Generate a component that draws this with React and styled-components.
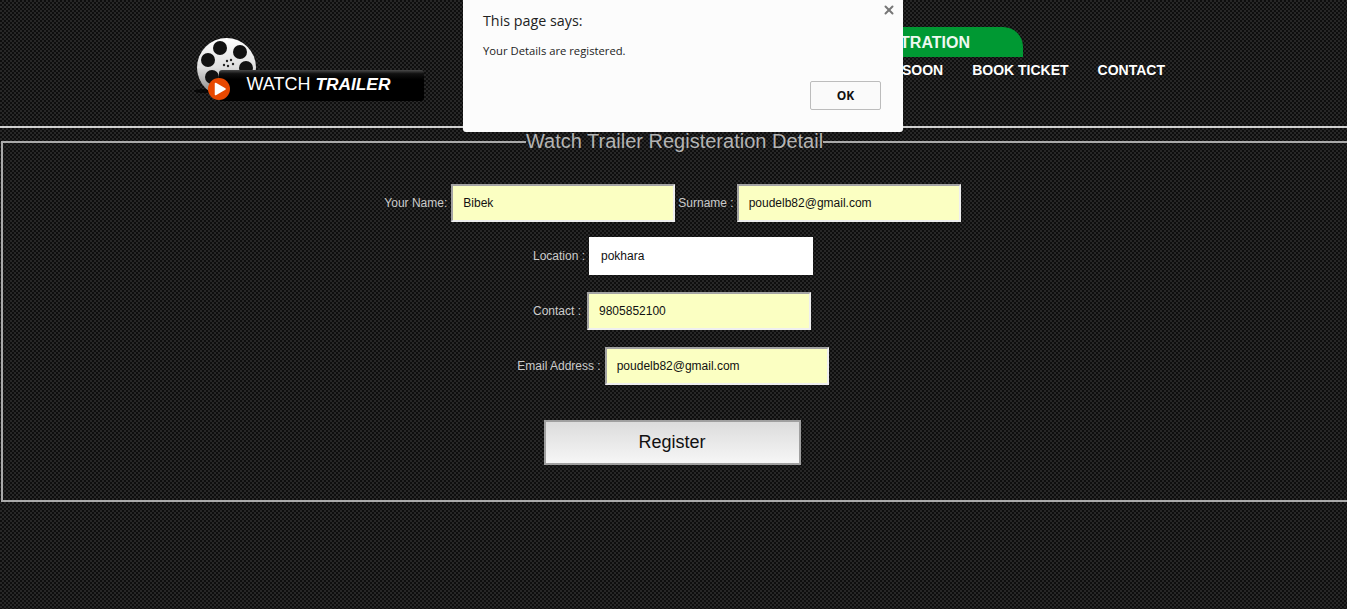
import React from "react";
import styled, { createGlobalStyle } from "styled-components";
import { X } from "lucide-react";

const GlobalStyle = createGlobalStyle`
  html, body {
    margin: 0;
    height: 100%;
    overflow: hidden;
  }
  body {
    font-family: "Liberation Sans", Arial, sans-serif;
    background-color: #181818;
    background-image: conic-gradient(#272727 25%, #0e0e0e 0 50%, #272727 0 75%, #0e0e0e 0);
    background-size: 4px 4px;
  }
`;

const Logo = () => (
  <LogoSvg viewBox="190 36 236 68" aria-label="Watch Trailer">
    <defs>
      <linearGradient id="reel" x1="0" y1="0" x2="0" y2="1">
        <stop offset="0" stopColor="#ffffff" />
        <stop offset="0.5" stopColor="#dedede" />
        <stop offset="1" stopColor="#7d7d7d" />
      </linearGradient>
      <linearGradient id="bar" x1="0" y1="0" x2="0" y2="1">
        <stop offset="0" stopColor="#4a4a4a" />
        <stop offset="0.12" stopColor="#111" />
        <stop offset="0.3" stopColor="#000" />
        <stop offset="1" stopColor="#000" />
      </linearGradient>
    </defs>
    <ellipse cx="204" cy="91" rx="10" ry="2" fill="#000" opacity="0.7" />
    <circle cx="226.5" cy="67.5" r="29.5" fill="url(#reel)" />
    <circle cx="220" cy="48" r="7" fill="#111" />
    <circle cx="240" cy="52" r="7" fill="#111" />
    <circle cx="208" cy="60" r="7" fill="#111" />
    <circle cx="246" cy="68" r="7" fill="#111" />
    <circle cx="212" cy="77" r="7" fill="#111" />
    <circle cx="227" cy="61" r="1.2" fill="#222" />
    <circle cx="231" cy="60" r="1.2" fill="#222" />
    <circle cx="224" cy="65" r="1.2" fill="#222" />
    <circle cx="233" cy="64" r="1.2" fill="#222" />
    <circle cx="228" cy="66" r="1.2" fill="#222" />
    <rect x="219" y="70" width="205" height="31" rx="3" fill="url(#bar)" />
    <circle cx="219" cy="89" r="11" fill="#e84800" />
    <path d="M215.5 83.5 L225 89 L215.5 94.5 Z" fill="#fff" stroke="#fff" strokeWidth="1.5" strokeLinejoin="round" />
    <LogoText x="246.5" y="90">
      WATCH <tspan fontWeight="700" fontStyle="italic" fontSize="17.3">TRAILER</tspan>
    </LogoText>
  </LogoSvg>
);

export default function App() {
  return (
    <Page>
      <GlobalStyle />
      <Header>
        <Logo />
        <HeaderRight>
          <RegisterTab>REGISTRATION</RegisterTab>
          <Nav>
            <NavLink>HOME</NavLink>
            <NavLink>MOVIES</NavLink>
            <NavLink>COMING SOON</NavLink>
            <NavLink>BOOK TICKET</NavLink>
            <NavLink>CONTACT</NavLink>
          </Nav>
        </HeaderRight>
      </Header>

      <FormBox>
        <Legend>Watch Trailer Registeration Detail</Legend>
        <Row $tight $shift={4}>
          <Label>Your Name:</Label>
          <Field $filled defaultValue="Bibek" />
          <Label $gap={0}>Surname :</Label>
          <Field $filled defaultValue="poudelb82@gmail.com" />
        </Row>
        <Row>
          <Label>Location :</Label>
          <Field defaultValue="pokhara" />
        </Row>
        <Row $shift={5}>
          <Label $gap={3}>Contact :</Label>
          <Field $filled defaultValue="9805852100" />
        </Row>
        <Row>
          <Label>Email Address :</Label>
          <Field $filled defaultValue="poudelb82@gmail.com" />
        </Row>
        <ButtonRow>
          <RegisterButton type="button">Register</RegisterButton>
        </ButtonRow>
      </FormBox>

      <Dialog>
        <CloseIcon size={14} strokeWidth={3.4} />
        <DialogTitle>This page says:</DialogTitle>
        <DialogText>Your Details are registered.</DialogText>
        <DialogActions>
          <OkButton type="button">OK</OkButton>
        </DialogActions>
      </Dialog>
    </Page>
  );
}

const Page = styled.div`
  position: relative;
  height: 609px;
  overflow: hidden;
`;

const Header = styled.header`
  display: flex;
  justify-content: space-between;
  box-sizing: border-box;
  height: 128px;
  padding: 0 182px 0 190px;
  border-bottom: 2px solid #d0d0d0;
`;

const LogoSvg = styled.svg`
  width: 236px;
  height: 68px;
  margin-top: 36px;
`;

const LogoText = styled.text`
  font-family: "Liberation Sans", Arial, sans-serif;
  font-size: 18px;
  fill: #fff;
`;

const HeaderRight = styled.div`
  display: flex;
  flex-direction: column;
  align-items: flex-end;
  padding-top: 27px;
`;

const RegisterTab = styled.div`
  height: 30px;
  line-height: 32px;
  margin-right: 142px;
  padding: 0 53px;
  background: #009933;
  border-top-right-radius: 20px;
  color: #eef8f1;
  font-size: 16px;
  font-weight: 700;
`;

const Nav = styled.nav`
  display: flex;
  gap: 29px;
  margin-top: 5px;
`;

const NavLink = styled.a`
  color: #fff;
  font-size: 14px;
  font-weight: 700;
  line-height: 16px;
`;

/* the right border runs off the page in the original */
const FormBox = styled.fieldset`
  box-sizing: border-box;
  width: 100%;
  height: 372px;
  margin: 2px 0 0 1px;
  padding: 31px 2px 0 0;
  border: 2px solid #aaa;
  border-right: 0;
  min-width: 0;
`;

const Legend = styled.legend`
  margin: 0 auto;
  padding: 0;
  color: #b4b4b4;
  font-size: 20px;
  line-height: 23px;
`;

const Row = styled.div`
  display: flex;
  justify-content: center;
  align-items: center;
  gap: 3px;
  padding-right: ${(p) => p.$shift ?? 3}px;
  margin-bottom: ${(p) => (p.$tight ? "15px" : "17px")};
`;

const Label = styled.label`
  color: #ccc;
  font-size: 12px;
  margin-right: ${(p) => p.$gap ?? 1}px;
`;

const Field = styled.input`
  box-sizing: border-box;
  width: 224px;
  height: 38px;
  padding: 0 10px;
  border: 2px solid;
  border-color: ${(p) => (p.$filled ? "#a3a3a3 #efefef #efefef #a3a3a3" : "#fff")};
  background: ${(p) => (p.$filled ? "#fbffc2" : "#fff")};
  color: #111;
  font-family: "Liberation Sans", Arial, sans-serif;
  font-size: 12px;
  outline: none;
`;

const ButtonRow = styled.div`
  display: flex;
  justify-content: center;
  margin-top: 35px;
  padding-right: 5px;
`;

const RegisterButton = styled.button`
  box-sizing: border-box;
  width: 257px;
  height: 45px;
  border: 2px solid #a0a0a0;
  background: linear-gradient(#dcdcdc, #f6f6f6);
  color: #111;
  font-family: "Liberation Sans", Arial, sans-serif;
  font-size: 18px;
`;

const Dialog = styled.div`
  position: absolute;
  top: 0;
  left: 463px;
  box-sizing: border-box;
  width: 440px;
  height: 132px;
  padding: 12px 20px 0;
  background: #fcfcfc;
  border-radius: 0 0 3px 3px;
  font-family: "Open Sans", "Noto Sans", sans-serif;
  color: #222;
`;

const CloseIcon = styled(X)`
  position: absolute;
  top: 3px;
  right: 7px;
  color: #777;
`;

const DialogTitle = styled.div`
  font-size: 14.3px;
  line-height: 18px;
`;

const DialogText = styled.div`
  margin-top: 13px;
  font-size: 11.25px;
  line-height: 16px;
`;

const DialogActions = styled.div`
  display: flex;
  justify-content: flex-end;
  margin-top: 22px;
  margin-right: 2px;
`;

const OkButton = styled.button`
  box-sizing: border-box;
  width: 71px;
  height: 29px;
  border: 1px solid #bcbcbc;
  border-radius: 2px;
  background: #fafafa;
  color: #111;
  font-family: "Open Sans", "Noto Sans", sans-serif;
  font-size: 12px;
  font-weight: 700;
`;
